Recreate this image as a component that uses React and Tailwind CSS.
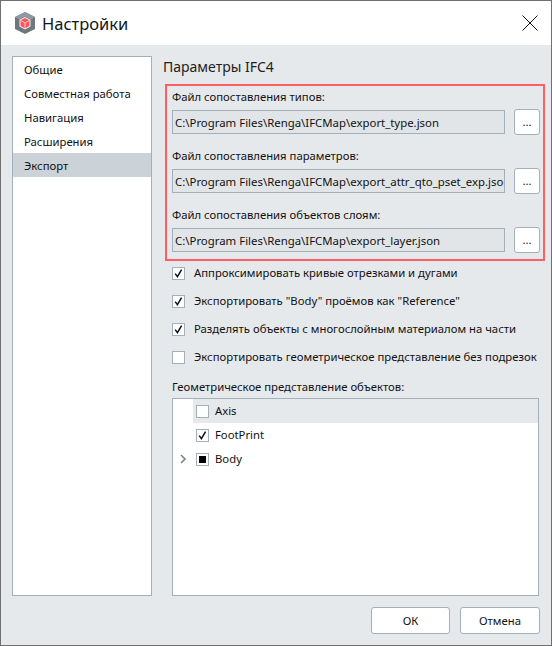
import React from "react";

const font = { fontFamily: '"Noto Sans", sans-serif' };

const navItems = ["Общие", "Совместная работа", "Навигация", "Расширения", "Экспорт"];

const fileFields = [
  { label: "Файл сопоставления типов:", value: "C:\\Program Files\\Renga\\IFCMap\\export_type.json" },
  { label: "Файл сопоставления параметров:", value: "C:\\Program Files\\Renga\\IFCMap\\export_attr_qto_pset_exp.json" },
  { label: "Файл сопоставления объектов слоям:", value: "C:\\Program Files\\Renga\\IFCMap\\export_layer.json" },
];

const options = [
  { label: "Аппроксимировать кривые отрезками и дугами", checked: true },
  { label: 'Экспортировать "Body" проёмов как "Reference"', checked: true },
  { label: "Разделять объекты с многослойным материалом на части", checked: true },
  { label: "Экспортировать геометрическое представление без подрезок", checked: false },
];

function Logo() {
  return (
    <svg width="22" height="24" viewBox="0 0 22 24" className="shrink-0">
      <path d="M11 1 L21 6 V18 L11 23 L1 18 V6 Z" fill="#6c7780" />
      <path d="M11 1 L21 6 L17 8.5 L11 5.5 L5 8.5 L1 6 Z" fill="#8f99a1" />
      <path d="M11 6 L16.5 8.8 V15.5 L11 18.5 L5.5 15.5 V8.8 Z" fill="#f4f5f6" />
      <path d="M11 7 L15.5 9.3 V15 L11 17.5 L6.5 15 V9.3 Z" fill="#f8575c" />
      <path d="M11 12 L15.5 9.3 M11 12 V17.5 M11 12 L6.5 9.3" stroke="#fbc4c7" strokeWidth="1" fill="none" />
    </svg>
  );
}

function Check({ checked, mixed }) {
  return (
    <span className="w-[13px] h-[13px] shrink-0 bg-white border border-[#a3afbb] flex items-center justify-center">
      {checked && (
        <svg width="11" height="11" viewBox="0 0 11 11">
          <path d="M2.2 5.6 L4.4 8.6 L8.6 1.6" stroke="#111" strokeWidth="1.5" fill="none" />
        </svg>
      )}
      {mixed && <span className="w-[7px] h-[7px] bg-black" />}
    </span>
  );
}

function FileField({ label, value }) {
  return (
    <div className="h-[59px] shrink-0">
      <div className="h-[22px] leading-[20px]">{label}</div>
      <div className="flex items-center">
        <div className="w-[333px] h-[24px] border border-[#a3afbb] bg-[#e2e5e8] pl-[2px] text-[11.4px] leading-[23px] overflow-hidden whitespace-nowrap">
          {value}
        </div>
        <button className="ml-[9px] w-[26px] h-[26px] bg-white border border-[#a3afbb] rounded-[3px] leading-[22px]">...</button>
      </div>
    </div>
  );
}

function TreeRow({ label, checked, mixed, expandable, hovered }) {
  return (
    <div className="flex h-[24px] items-center">
      <div className="w-[20px] shrink-0 flex justify-center">
        {expandable && (
          <svg width="8" height="10" viewBox="0 0 8 10">
            <path d="M2 1 L6 5 L2 9" stroke="#76828d" strokeWidth="1.6" fill="none" />
          </svg>
        )}
      </div>
      <div className={`flex-1 flex items-center h-full pl-[3px] ${hovered ? "bg-[#e6e9ec]" : ""}`}>
        <Check checked={checked} mixed={mixed} />
        <span className="ml-[6px]">{label}</span>
      </div>
    </div>
  );
}

export default function App() {
  return (
    <div style={font} className="w-[552px] h-[646px] bg-[#e6e9ec] border border-[#707070] flex flex-col text-[11.3px] text-[#111] overflow-hidden">
      <div className="h-[44px] shrink-0 bg-white flex items-center pl-[13px] pr-[13px]">
        <Logo />
        <span className="ml-[6px] pt-[3px] text-[16.5px] text-[#101820] flex-1">Настройки</span>
        <svg width="16" height="16" viewBox="0 0 16 16">
          <path d="M0.5 0.5 L15.5 15.5 M15.5 0.5 L0.5 15.5" stroke="#111" strokeWidth="1" />
        </svg>
      </div>
      <div className="flex-1 flex pt-[11px] pl-[11px] pr-[6px] min-h-0">
        <div className="w-[140px] h-[540px] shrink-0 bg-white border border-[#a3afbb]">
          {navItems.map((item) => (
            <div key={item} className={`h-[24px] leading-[25px] pl-[11px] ${item === "Экспорт" ? "bg-[#cbd2d8]" : ""}`}>
              {item}
            </div>
          ))}
        </div>
        <div className="flex-1 ml-[11px] flex flex-col min-w-0">
          <div className="h-[28px] text-[14px] leading-[21px] text-[#222] shrink-0">Параметры IFC4</div>
          <div className="ml-[2px] w-[380px] h-[177px] shrink-0 border-2 border-[#ff5f63] pt-[1px] pl-[5px]">
            {fileFields.map((f) => (
              <FileField key={f.label} {...f} />
            ))}
          </div>
          <div className="ml-[9px] mt-[1px] flex flex-col gap-[6px]">
            {options.map((o) => (
              <div key={o.label} className="h-[22px] flex items-center">
                <Check checked={o.checked} />
                <span className="ml-[9px] whitespace-nowrap">{o.label}</span>
              </div>
            ))}
          </div>
          <div className="ml-[9px] mt-[9px] h-[21px] leading-[20px]">Геометрическое представление объектов:</div>
          <div className="ml-[9px] w-[367px] h-[198px] bg-white border border-[#a3afbb]">
            <TreeRow label="Axis" hovered />
            <TreeRow label="FootPrint" checked />
            <TreeRow label="Body" mixed expandable />
          </div>
        </div>
      </div>
      <div className="h-[47px] shrink-0 flex justify-end gap-[10px] pr-[11px] pt-[9px]">
        <button className="w-[79px] h-[27px] pt-[1px] bg-white border border-[#a3afbb] rounded-[3px]">ОК</button>
        <button className="w-[80px] h-[27px] pt-[1px] bg-white border border-[#a3afbb] rounded-[3px]">Отмена</button>
      </div>
    </div>
  );
}
